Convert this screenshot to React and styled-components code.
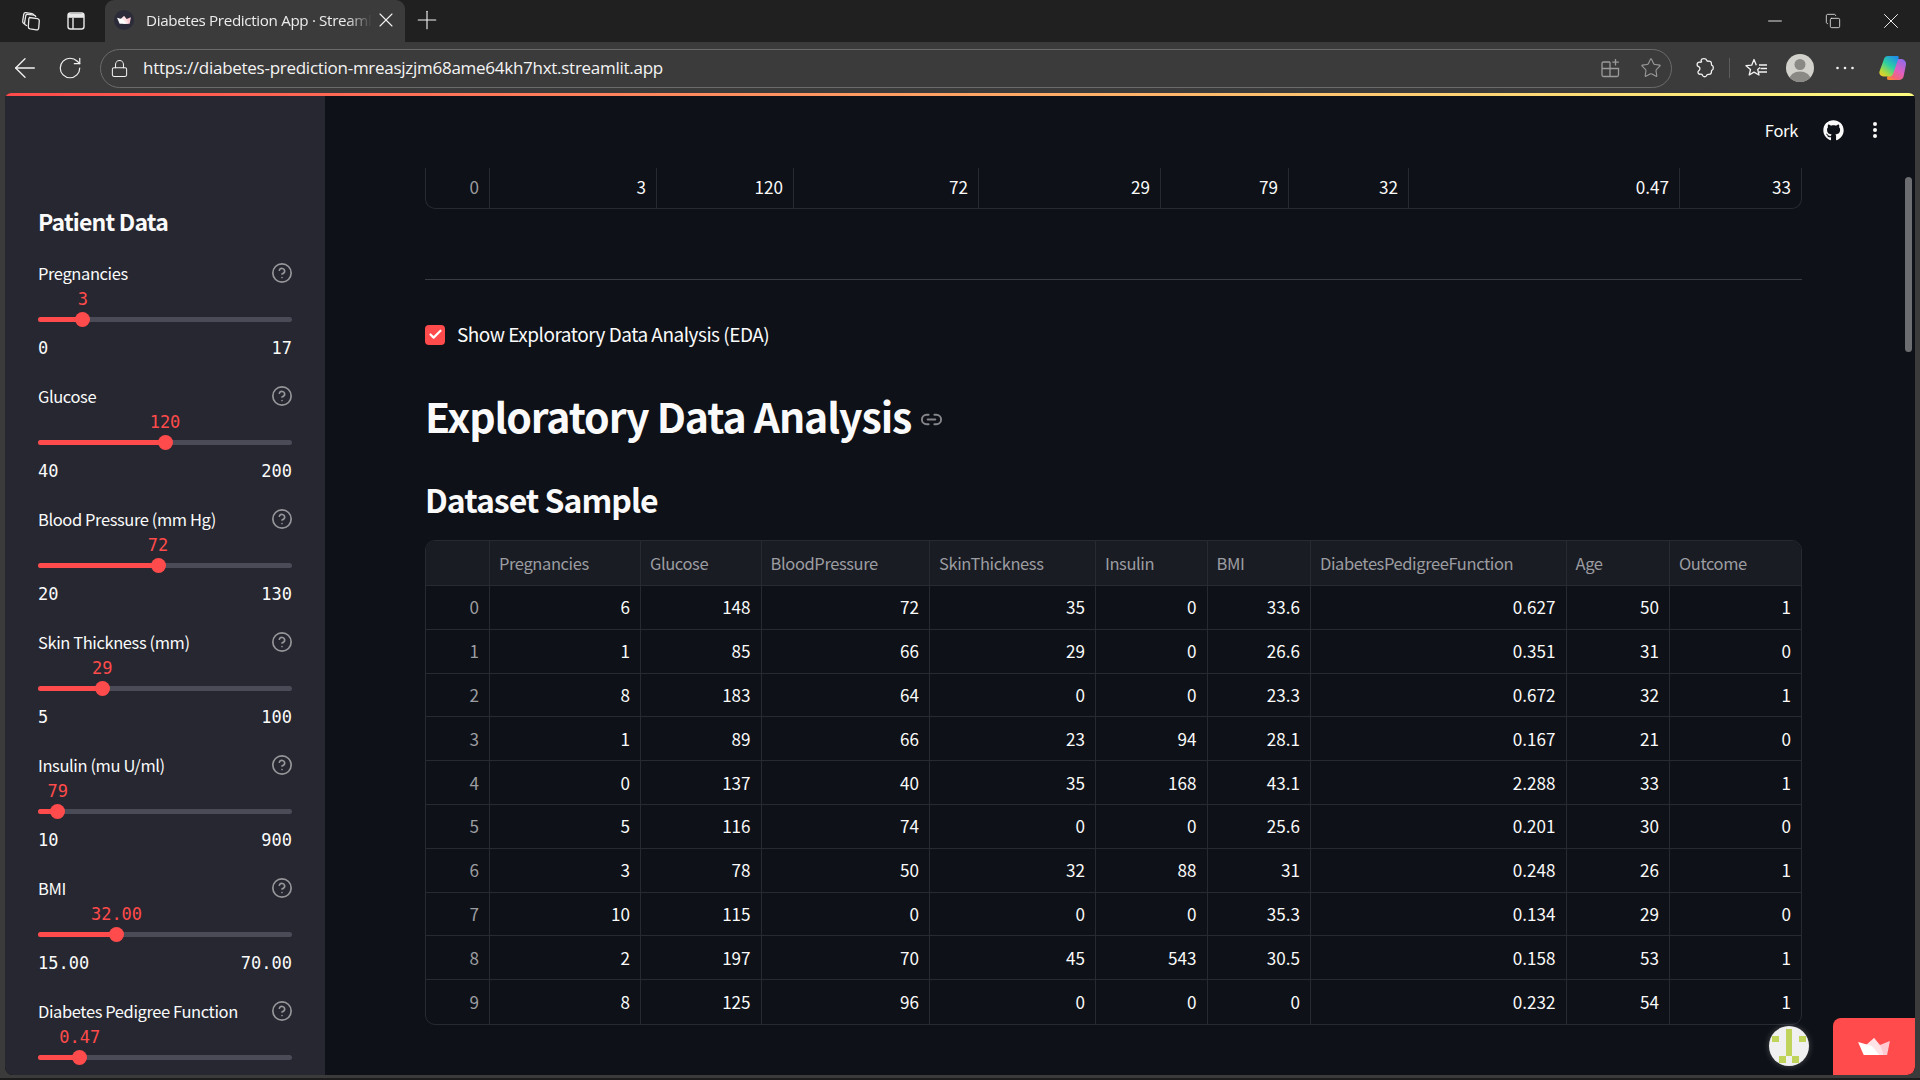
import React from 'react';
import styled, { createGlobalStyle } from 'styled-components';
import { ArrowLeft, RotateCw, Lock, X, Plus, Star, CircleHelp, Link2, Check, Minus, Copy } from 'lucide-react';
import { FaGithub } from 'react-icons/fa';

const SANS = '"Noto Sans CJK JP", "Noto Sans", sans-serif';
const MONO = '"DejaVu Sans Mono", "Liberation Mono", monospace';
const CHROME = '"Open Sans", "Noto Sans", sans-serif';

const GlobalStyle = createGlobalStyle`
  html, body {
    margin: 0;
    padding: 0;
    height: 100%;
    overflow: hidden;
    background: #3b3b3b;
  }
  * {
    box-sizing: border-box;
  }
`;

const Browser = styled.div`
  width: 1920px;
  height: 1080px;
  display: flex;
  flex-direction: column;
  background: #3b3b3b;
  overflow: hidden;
`;

const TabStrip = styled.div`
  height: 42px;
  flex: none;
  display: flex;
  align-items: center;
  background: #202020;
  color: #f2f2f2;
`;

const StripIcon = styled.div`
  width: 45px;
  height: 42px;
  display: flex;
  align-items: center;
  justify-content: center;
  flex: none;
`;

const StripLead = styled.div`
  width: 105px;
  display: flex;
  padding-left: 8px;
  flex: none;
`;

const Tab = styled.div`
  width: 300px;
  height: 42px;
  flex: none;
  display: flex;
  align-items: center;
  padding: 0 7px 2px 9px;
  background: #3b3b3b;
  border-radius: 9px 9px 0 0;
`;

const Favicon = styled.div`
  width: 20px;
  height: 20px;
  border-radius: 50%;
  background: #2b2b3a;
  display: flex;
  align-items: center;
  justify-content: center;
  flex: none;
`;

const TabTitle = styled.div`
  flex: 1;
  min-width: 0;
  margin-left: 12px;
  font: 400 15.2px/20px ${CHROME};
  letter-spacing: -0.35px;
  color: #ececec;
  white-space: nowrap;
  overflow: hidden;
  -webkit-mask-image: linear-gradient(90deg, #000 88%, transparent 99%);
  mask-image: linear-gradient(90deg, #000 88%, transparent 99%);
`;

const NewTab = styled.div`
  width: 44px;
  padding-bottom: 2px;
  display: flex;
  justify-content: center;
`;

const WindowControls = styled.div`
  margin-left: auto;
  display: flex;
`;

const WindowButton = styled.div`
  width: 58px;
  height: 42px;
  display: flex;
  align-items: center;
  justify-content: center;
`;

const Toolbar = styled.div`
  height: 51px;
  flex: none;
  display: flex;
  align-items: center;
  background: #3b3b3b;
  color: #f2f2f2;
`;

const NavButton = styled.div`
  width: ${(p) => p.$w || 45}px;
  height: 40px;
  flex: none;
  display: flex;
  align-items: center;
  justify-content: center;
`;

const AddressBar = styled.div`
  width: 1572px;
  height: 39px;
  margin-left: 10px;
  margin-top: 1px;
  flex: none;
  display: flex;
  align-items: center;
  padding: 0 9.5px 0 9px;
  border: 1px solid #6b6b6b;
  border-radius: 20px;
`;

const Url = styled.div`
  margin-left: 14px;
  font: 400 17px/24px ${CHROME};
  letter-spacing: -0.27px;
  color: #f4f4f4;
`;

const BarIcons = styled.div`
  margin-left: auto;
  display: flex;
  align-items: center;
  gap: 20px;
  color: #9a9a9a;
`;

const ToolbarIcons = styled.div`
  display: flex;
  align-items: center;
  padding-left: 7px;
`;

const Separator = styled.div`
  width: 1px;
  height: 20px;
  background: #5c5c5c;
  flex: none;
`;

const Viewport = styled.div`
  flex: none;
  height: 982px;
  margin: 0 5px;
  position: relative;
  display: flex;
  flex-direction: column;
  overflow: hidden;
  border-radius: 6px 6px 8px 8px;
  background: #0e1117;
`;

const AccentLine = styled.div`
  height: 3px;
  flex: none;
  background: linear-gradient(90deg, #ff4b4b, #fffd80);
`;

const PageBody = styled.div`
  flex: 1;
  display: flex;
  min-height: 0;
`;

const Sidebar = styled.aside`
  width: 320px;
  flex: none;
  padding: 105px 33px 0;
  background: #262730;
  color: #fafafa;
  overflow: hidden;
`;

const SidebarTitle = styled.h2`
  margin: 0 0 21px;
  font: 600 23px/40px ${SANS};
  letter-spacing: -0.8px;
`;

const SliderGroup = styled.div`
  height: 123px;
`;

const SliderLabel = styled.div`
  height: 22px;
  display: flex;
  align-items: center;
  justify-content: space-between;
  font: 400 16.5px/22px ${SANS};
  letter-spacing: -0.4px;
  color: #fafafa;
  svg {
    color: #97979b;
    margin-right: -1px;
  }
`;

const Track = styled.div`
  position: relative;
  height: 5px;
  margin-top: 33px;
  border-radius: 3px;
  background: #4a4b57;
`;

const TrackFill = styled.div`
  height: 100%;
  border-radius: 3px;
  background: #ff4b4b;
`;

const Thumb = styled.div`
  position: absolute;
  top: -5px;
  width: 15px;
  height: 15px;
  margin-left: -7.5px;
  border-radius: 50%;
  background: #ff4b4b;
`;

const SliderValue = styled.div`
  position: absolute;
  bottom: 13px;
  transform: translateX(-50%);
  font: 400 17px/20px ${MONO};
  color: #ff4b4b;
  white-space: nowrap;
`;

const RangeRow = styled.div`
  display: flex;
  justify-content: space-between;
  margin-top: 16px;
  font: 400 17px/20px ${MONO};
  color: #fafafa;
`;

const Main = styled.main`
  flex: 1;
  min-width: 0;
  position: relative;
  padding: 72px 113px 0 100px;
  color: #fafafa;
`;

const TopActions = styled.div`
  position: absolute;
  top: 22px;
  right: 38px;
  display: flex;
  align-items: center;
  font: 400 16.5px/24px ${SANS};
  letter-spacing: -0.3px;
  color: #fafafa;
`;

const ForkLabel = styled.span`
  margin-right: 25px;
`;

const MenuDots = styled.svg`
  margin-left: 29px;
`;

const Cell = styled.div`
  display: flex;
  align-items: center;
  justify-content: ${(p) => (p.$head ? 'flex-start' : 'flex-end')};
  padding: ${(p) => (p.$head ? '0 10px 0 9px' : '0 10px')};
  border-left: ${(p) => (p.$first ? 'none' : '1px solid #272a31')};
  color: ${(p) => (p.$muted ? '#9c9da1' : '#fafafa')};
  font-size: ${(p) => (p.$head ? 16.5 : 17.1)}px;
  letter-spacing: ${(p) => (p.$head ? -0.4 : 0)}px;
`;

const TableFrame = styled.div`
  border: 1px solid #272a31;
  border-radius: 10px;
  overflow: hidden;
  font: 400 17.1px/22px ${SANS};
`;

const ClippedTable = styled(TableFrame)`
  border-top: none;
  border-radius: 0 0 10px 10px;
  ${Cell} {
    padding-bottom: 3px;
  }
`;

const TableRow = styled.div`
  display: grid;
  grid-template-columns: ${(p) => p.$cols};
  height: ${(p) => p.$h}px;
  border-bottom: ${(p) => (p.$last ? 'none' : '1px solid #272a31')};
  background: ${(p) => (p.$head ? '#1a1c24' : 'transparent')};
`;

const Rule = styled.hr`
  height: 1px;
  margin: 70px 0 0;
  border: none;
  background: #3a3c43;
`;

const CheckRow = styled.label`
  display: flex;
  align-items: center;
  gap: 12px;
  margin-top: 43px;
  height: 22px;
  font: 400 19px/22px ${SANS};
  letter-spacing: -0.5px;
`;

const CheckBox = styled.span`
  width: 20px;
  height: 20px;
  margin-top: 1px;
  border-radius: 4px;
  background: #ff4b4b;
  display: flex;
  align-items: center;
  justify-content: center;
`;

const Heading = styled.h1`
  display: flex;
  align-items: center;
  margin: 42px 0 0;
  font: 600 41px/56px ${SANS};
  letter-spacing: -1.1px;
  svg {
    color: #85868a;
    margin: 8px 0 0 9px;
  }
`;

const SubHeading = styled.h2`
  margin: 33.5px 0 0;
  font: 600 32px/44px ${SANS};
  letter-spacing: -1px;
`;

const DatasetTable = styled(TableFrame)`
  margin-top: 19.5px;
`;

const ScrollThumb = styled.div`
  position: absolute;
  top: 84px;
  right: 3px;
  width: 7px;
  height: 175px;
  border-radius: 4px;
  background: #6c6d71;
`;

const AvatarBubble = styled.div`
  position: absolute;
  right: 106px;
  bottom: 9px;
  width: 40px;
  height: 40px;
  border-radius: 50%;
  background: #f0f0f0;
  box-shadow: 0 0 6px rgba(255, 255, 255, 0.25);
  overflow: hidden;
`;

const HostedBadge = styled.div`
  position: absolute;
  right: 0;
  bottom: 0;
  width: 82px;
  height: 57px;
  border-radius: 8px 0 8px 0;
  background: #ff4b4b;
  display: flex;
  align-items: center;
  justify-content: center;
`;

const BottomEdge = styled.div`
  height: 2px;
  flex: none;
  margin-top: 3px;
  background: #1c1c1c;
`;

const CrownMark = ({ size }) => (
  <svg width={size} height={size * 0.56} viewBox="0 0 32 18">
    <path d="M14 8L16 0l6 7 10-4-3 15h-8z" fill="#ffc9d2" />
    <path d="M8 7l8-7 7 9 3 9H14z" fill="#ffe3e7" />
    <path d="M0 4l14 4 8 10H6z" fill="#fff" />
  </svg>
);

const sliders = [
  { label: 'Pregnancies', min: 0, max: 17, value: 3, digits: 0 },
  { label: 'Glucose', min: 40, max: 200, value: 120, digits: 0 },
  { label: 'Blood Pressure (mm Hg)', min: 20, max: 130, value: 72, digits: 0 },
  { label: 'Skin Thickness (mm)', min: 5, max: 100, value: 29, digits: 0 },
  { label: 'Insulin (mu U/ml)', min: 10, max: 900, value: 79, digits: 0 },
  { label: 'BMI', min: 15, max: 70, value: 32, digits: 2 },
  // range row of this one is below the fold
  { label: 'Diabetes Pedigree Function', min: 0.07, max: 2.5, value: 0.47, digits: 2, noRange: true },
];

const columns = ['Pregnancies', 'Glucose', 'BloodPressure', 'SkinThickness', 'Insulin', 'BMI', 'DiabetesPedigreeFunction', 'Age', 'Outcome'];

const sampleRows = [
  [6, 148, 72, 35, 0, 33.6, 0.627, 50, 1],
  [1, 85, 66, 29, 0, 26.6, 0.351, 31, 0],
  [8, 183, 64, 0, 0, 23.3, 0.672, 32, 1],
  [1, 89, 66, 23, 94, 28.1, 0.167, 21, 0],
  [0, 137, 40, 35, 168, 43.1, 2.288, 33, 1],
  [5, 116, 74, 0, 0, 25.6, 0.201, 30, 0],
  [3, 78, 50, 32, 88, 31, 0.248, 26, 1],
  [10, 115, 0, 0, 0, 35.3, 0.134, 29, 0],
  [2, 197, 70, 45, 543, 30.5, 0.158, 53, 1],
  [8, 125, 96, 0, 0, 0, 0.232, 54, 1],
];

const topCols = '63px 167px 137px 185px 182px 128px 120px 271px 122px 1fr';
const sampleCols = '63px 151px 120.6px 168.4px 166px 111.6px 103.4px 255.6px 103.4px 1fr';

const PatientSlider = ({ label, min, max, value, digits, noRange }) => {
  const pct = ((value - min) / (max - min)) * 100;
  return (
    <SliderGroup>
      <SliderLabel>
        {label}
        <CircleHelp size={22} strokeWidth={1.8} />
      </SliderLabel>
      <Track>
        <TrackFill style={{ width: `${pct}%` }} />
        <Thumb style={{ left: `${pct}%` }} />
        <SliderValue style={{ left: `${pct}%` }}>{value.toFixed(digits)}</SliderValue>
      </Track>
      {!noRange && (
        <RangeRow>
          <span>{min.toFixed(digits)}</span>
          <span>{max.toFixed(digits)}</span>
        </RangeRow>
      )}
    </SliderGroup>
  );
};

export default function App() {
  return (
    <Browser>
      <GlobalStyle />
      <TabStrip>
        <StripLead>
          <StripIcon>
            <svg width="24" height="24" viewBox="0 0 24 24" fill="none" stroke="#e8e8e8" strokeWidth="1.3">
              <path d="M10 8.500l8.500 1.200c1.200.2 1.800 1 1.800 2.100l-.6 7.200c-.1 1.200-1 2-2.300 1.800l-6.300-.9c-1.200-.2-1.800-1-1.800-2.200l.5-7.500c.1-1.200.5-1.800.2-1.700z" />
              <path d="M8 16.800l-1.400-.8c-.9-.5-1.200-1.200-1-2.200l1.100-7c.2-1.100 1-1.700 2.200-1.500l6 .9c1.200.2 1.800.8 2 1.800" />
              <path d="M5.500 15l-1-.8c-.8-.6-1-1.300-.8-2.300l1.100-6.700c.2-1.100 1-1.700 2.200-1.500l6 .9c1 .2 1.600.6 1.900 1.400" />
            </svg>
          </StripIcon>
          <StripIcon>
            <svg width="20" height="20" viewBox="0 0 20 20" fill="none" stroke="#e8e8e8" strokeWidth="1.4">
              <rect x="2" y="2" width="16" height="16" rx="2.500" />
              <path d="M2 4.800h16" strokeWidth="4" />
              <path d="M7 7v11" />
            </svg>
          </StripIcon>
        </StripLead>
        <Tab>
          <Favicon>
            <CrownMark size={14} />
          </Favicon>
          <TabTitle>Diabetes Prediction App · Streamlit</TabTitle>
          <X size={24} strokeWidth={1.1} />
        </Tab>
        <NewTab>
          <Plus size={30} strokeWidth={0.9} />
        </NewTab>
        <WindowControls>
          <WindowButton>
            <Minus size={22} strokeWidth={1} />
          </WindowButton>
          <WindowButton>
            <Copy size={16} strokeWidth={1.2} />
          </WindowButton>
          <WindowButton>
            <X size={26} strokeWidth={0.9} />
          </WindowButton>
        </WindowControls>
      </TabStrip>

      <Toolbar>
        <NavButton $w={50}>
          <ArrowLeft size={32} strokeWidth={1} />
        </NavButton>
        <NavButton $w={40}>
          <RotateCw size={26} strokeWidth={1.1} />
        </NavButton>
        <AddressBar>
          <Lock size={19} strokeWidth={1.3} />
          <Url>https://diabetes-prediction-mreasjzjm68ame64kh7hxt.streamlit.app</Url>
          <BarIcons>
            <svg width="20" height="20" viewBox="0 0 20 20" fill="none" stroke="currentColor" strokeWidth="1.3">
              <path d="M10 4H3.500A1.500 1.500 0 0 0 2 5.500V17a1.500 1.500 0 0 0 1.500 1.500H17a1.500 1.500 0 0 0 1.500-1.500V10.500H2M10 4v14.500" />
              <path d="M15.500 1v6.500M12.300 4.200h6.500" />
            </svg>
            <Star size={22} strokeWidth={1.2} />
          </BarIcons>
        </AddressBar>
        <ToolbarIcons>
          <NavButton $w={50}>
            <svg width="20" height="22" viewBox="0 0 20 22" fill="none" stroke="#f2f2f2" strokeWidth="1.3" strokeLinejoin="round">
              <path d="M7 3.500c.7-2.600 5.100-2.600 5.800 0 .2.700 1 .8 2 .7 1.800-.1 2.700.8 2.600 2.500-.1 1 .1 1.700 1 2 1.200.5 1.200 3.600 0 4.100-.9.300-1.100 1-1 2 .1 1.700-.8 2.600-2.600 2.500-1 0-1.800.1-2 .8-.6 2.200-3.700 2.200-4.400 0-.3-.8-1-1-2-.9-1.500.2-2.500-.6-2.400-2.200.1-1.100.9-1.400 1.400-2 .7-.9.700-2.500-.4-3.100-1-.6-2-1-1.900-2.200 0-1.700 1-2.600 2.500-2.500 1 .1 1.800-.1 2-.7z" />
            </svg>
          </NavButton>
          <Separator />
          <NavButton $w={52}>
            <svg width="23" height="21" viewBox="0 0 23 21" fill="none" stroke="#f2f2f2" strokeWidth="1.300" strokeLinejoin="round">
              <path d="M15 10.500l-2.300 2 1.300 5.500-5-2.900-4.800 2.900 1.300-5.500L1 8.700l5.700-.5L9 2.500l2.300 5.700" />
              <path d="M14 8h8M15.500 11.500H22M14 15h8" />
            </svg>
          </NavButton>
          <NavButton $w={36}>
            <svg width="28" height="28" viewBox="0 0 28 28">
              <defs>
                <clipPath id="avatar-clip">
                  <circle cx="14" cy="14" r="14" />
                </clipPath>
              </defs>
              <circle cx="14" cy="14" r="14" fill="#d2d1cc" />
              <g clipPath="url(#avatar-clip)">
                <circle cx="14" cy="10.500" r="5.500" fill="#8a8986" />
                <ellipse cx="14" cy="25" rx="10.500" ry="7.500" fill="#8a8986" />
              </g>
            </svg>
          </NavButton>
          <NavButton $w={54}>
            <svg width="20" height="4" viewBox="0 0 20 4" fill="#f2f2f2">
              <circle cx="2.500" cy="2" r="1.300" />
              <circle cx="10" cy="2" r="1.300" />
              <circle cx="17.500" cy="2" r="1.300" />
            </svg>
          </NavButton>
          <NavButton $w={42}>
            <svg width="28" height="28" viewBox="0 0 28 28">
              <defs>
                <linearGradient id="copilot-a" x1="0.8" y1="0" x2="0.1" y2="1">
                  <stop offset="0" stopColor="#1f8fe8" />
                  <stop offset="0.45" stopColor="#2fd0a0" />
                  <stop offset="0.8" stopColor="#b6d93a" />
                  <stop offset="1" stopColor="#f6c92d" />
                </linearGradient>
                <linearGradient id="copilot-b" x1="0.8" y1="0" x2="0.2" y2="1">
                  <stop offset="0" stopColor="#8f6be8" />
                  <stop offset="0.5" stopColor="#e05fc0" />
                  <stop offset="0.85" stopColor="#f5676f" />
                  <stop offset="1" stopColor="#f9892f" />
                </linearGradient>
              </defs>
              <path d="M17 5h5c3 0 5.600 2.500 5 5.500l-2.400 12c-.5 2.300-2.300 3.500-4.600 3.500H10c-1.800 0-2.500-1-1.900-2.500L14 7c.4-1.200 1.500-2 3-2z" fill="url(#copilot-b)" />
              <path d="M9 2h9c1.600 0 2 1 1.500 2.400L14 20c-.6 1.500-1.500 2.500-3 2.500H4.500c-3 0-4.700-2.500-4-5L5 5c.5-1.800 2-3 4-3z" fill="url(#copilot-a)" />
            </svg>
          </NavButton>
        </ToolbarIcons>
      </Toolbar>

      <Viewport>
        <AccentLine />
        <PageBody>
          <Sidebar>
            <SidebarTitle>Patient Data</SidebarTitle>
            {sliders.map((s) => (
              <PatientSlider key={s.label} {...s} />
            ))}
          </Sidebar>
          <Main>
            <TopActions>
              <ForkLabel>Fork</ForkLabel>
              <FaGithub size={21} />
              <MenuDots width="4" height="18" viewBox="0 0 4 18" fill="#fafafa">
                <circle cx="2" cy="3" r="2" />
                <circle cx="2" cy="9" r="2" />
                <circle cx="2" cy="15" r="2" />
              </MenuDots>
            </TopActions>

            <ClippedTable>
              <TableRow $cols={topCols} $h={40} $last>
                <Cell $first $muted>0</Cell>
                {[3, 120, 72, 29, 79, 32, 0.47, 33].map((v, i) => (
                  <Cell key={i}>{v}</Cell>
                ))}
              </TableRow>
            </ClippedTable>

            <Rule />

            <CheckRow>
              <CheckBox>
                <Check size={15} color="#fff" strokeWidth={3.5} />
              </CheckBox>
              Show Exploratory Data Analysis (EDA)
            </CheckRow>

            <Heading>
              Exploratory Data Analysis
              <Link2 size={23} strokeWidth={2} />
            </Heading>
            <SubHeading>Dataset Sample</SubHeading>

            <DatasetTable>
              <TableRow $cols={sampleCols} $h={45} $head>
                <Cell $first $head />
                {columns.map((c) => (
                  <Cell key={c} $head $muted>{c}</Cell>
                ))}
              </TableRow>
              {sampleRows.map((row, i) => (
                <TableRow key={i} $cols={sampleCols} $h={43.8} $last={i === sampleRows.length - 1}>
                  <Cell $first $muted>{i}</Cell>
                  {row.map((v, j) => (
                    <Cell key={j}>{v}</Cell>
                  ))}
                </TableRow>
              ))}
            </DatasetTable>
          </Main>
        </PageBody>

        <ScrollThumb />
        <AvatarBubble>
          <svg width="40" height="40" viewBox="0 0 40 40" fill="#c0d45c">
            <rect x="17" y="3" width="6" height="24" />
            <rect x="3" y="10" width="7" height="6" />
            <rect x="30" y="10" width="7" height="6" />
            <rect x="10" y="30" width="7" height="7" />
            <rect x="23" y="30" width="7" height="7" />
            <rect x="17" y="24" width="6" height="6" />
          </svg>
        </AvatarBubble>
        <HostedBadge>
          <CrownMark size={32} />
        </HostedBadge>
      </Viewport>
      <BottomEdge />
    </Browser>
  );
}
